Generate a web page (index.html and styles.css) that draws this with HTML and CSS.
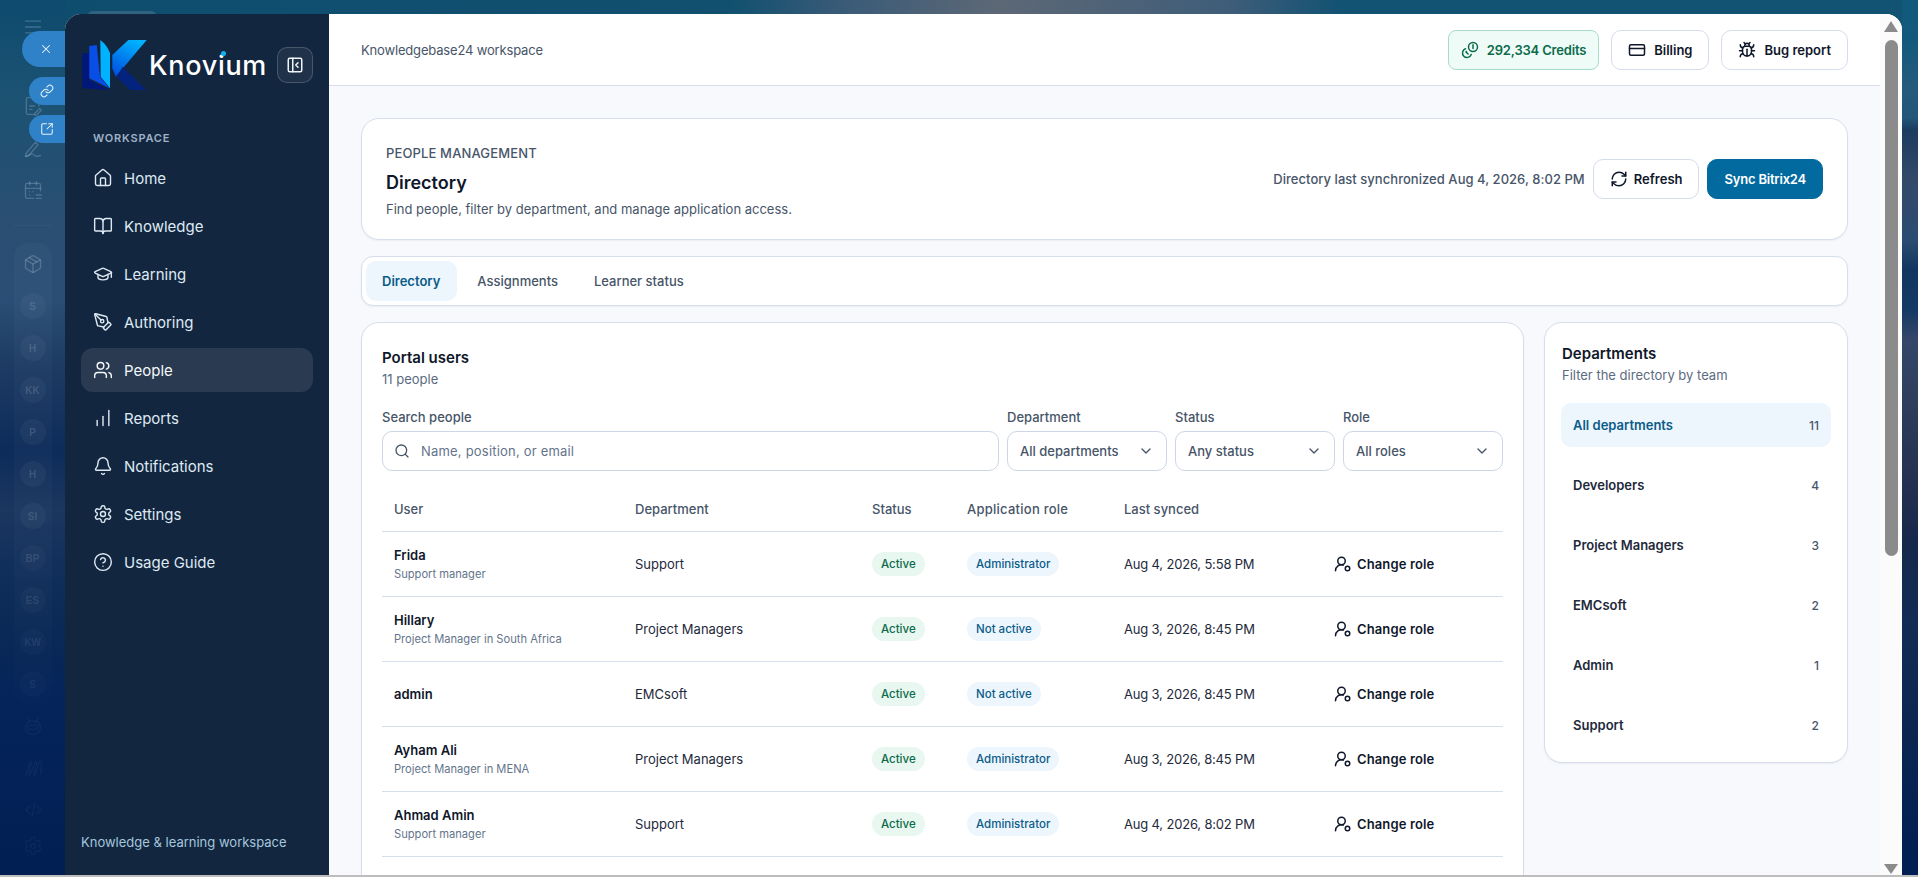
FILE: index.html
```html
<!DOCTYPE html>
<html lang="en">
<head>
<meta charset="utf-8">
<title>Knovium - Directory</title>
<link rel="stylesheet" href="styles.css">
</head>
<body>
<svg class="sprite" aria-hidden="true">
  <defs>
    <linearGradient id="kg" x1="0.7" y1="0" x2="0.2" y2="1"><stop offset="0" stop-color="#00b4ff"/><stop offset="1" stop-color="#0050e0"/></linearGradient>
  </defs>
  <symbol id="i-home" viewBox="0 0 24 24"><path d="M15 21v-8a1 1 0 0 0-1-1h-4a1 1 0 0 0-1 1v8"/><path d="M3 10a2 2 0 0 1 .709-1.528l7-5.999a2 2 0 0 1 2.582 0l7 5.999A2 2 0 0 1 21 10v9a2 2 0 0 1-2 2H5a2 2 0 0 1-2-2z"/></symbol>
  <symbol id="i-book" viewBox="0 0 24 24"><path d="M12 7v14"/><path d="M3 18a1 1 0 0 1-1-1V4a1 1 0 0 1 1-1h5a4 4 0 0 1 4 4 4 4 0 0 1 4-4h5a1 1 0 0 1 1 1v13a1 1 0 0 1-1 1h-6a3 3 0 0 0-3 3 3 3 0 0 0-3-3z"/></symbol>
  <symbol id="i-cap" viewBox="0 0 24 24"><path d="M21.42 10.922a1 1 0 0 0-.019-1.838L12.83 5.18a2 2 0 0 0-1.66 0L2.6 9.08a1 1 0 0 0 0 1.832l8.57 3.908a2 2 0 0 0 1.66 0z"/><path d="M22 10v6"/><path d="M6 12.5V16a6 3 0 0 0 12 0v-3.5"/></symbol>
  <symbol id="i-pen" viewBox="0 0 24 24"><path d="M15.707 21.293a1 1 0 0 1-1.414 0l-1.586-1.586a1 1 0 0 1 0-1.414l5.586-5.586a1 1 0 0 1 1.414 0l1.586 1.586a1 1 0 0 1 0 1.414z"/><path d="m18 13-1.375-6.874a1 1 0 0 0-.746-.776L3.235 2.028a1 1 0 0 0-1.207 1.207L5.35 15.879a1 1 0 0 0 .776.746L13 18"/><path d="m2.3 2.3 7.286 7.286"/><circle cx="11" cy="11" r="2"/></symbol>
  <symbol id="i-users" viewBox="0 0 24 24"><path d="M16 21v-2a4 4 0 0 0-4-4H6a4 4 0 0 0-4 4v2"/><circle cx="9" cy="7" r="4"/><path d="M22 21v-2a4 4 0 0 0-3-3.87"/><path d="M16 3.13a4 4 0 0 1 0 7.75"/></symbol>
  <symbol id="i-bars" viewBox="0 0 24 24"><path d="M5 21v-6"/><path d="M12 21V10"/><path d="M19 21V3"/></symbol>
  <symbol id="i-bell" viewBox="0 0 24 24"><path d="M10.268 21a2 2 0 0 0 3.464 0"/><path d="M3.262 15.326A1 1 0 0 0 4 17h16a1 1 0 0 0 .74-1.673C19.41 13.956 18 12.499 18 8A6 6 0 0 0 6 8c0 4.499-1.411 5.956-2.738 7.326"/></symbol>
  <symbol id="i-gear" viewBox="0 0 24 24"><path d="M12.22 2h-.44a2 2 0 0 0-2 2v.18a2 2 0 0 1-1 1.73l-.43.25a2 2 0 0 1-2 0l-.15-.08a2 2 0 0 0-2.73.73l-.22.38a2 2 0 0 0 .73 2.73l.15.1a2 2 0 0 1 1 1.72v.51a2 2 0 0 1-1 1.74l-.15.09a2 2 0 0 0-.73 2.73l.22.38a2 2 0 0 0 2.73.73l.15-.08a2 2 0 0 1 2 0l.43.25a2 2 0 0 1 1 1.73V20a2 2 0 0 0 2 2h.44a2 2 0 0 0 2-2v-.18a2 2 0 0 1 1-1.73l.43-.25a2 2 0 0 1 2 0l.15.08a2 2 0 0 0 2.73-.73l.22-.39a2 2 0 0 0-.73-2.73l-.15-.08a2 2 0 0 1-1-1.74v-.5a2 2 0 0 1 1-1.74l.15-.09a2 2 0 0 0 .73-2.73l-.22-.38a2 2 0 0 0-2.73-.73l-.15.08a2 2 0 0 1-2 0l-.43-.25a2 2 0 0 1-1-1.73V4a2 2 0 0 0-2-2z"/><circle cx="12" cy="12" r="3"/></symbol>
  <symbol id="i-help" viewBox="0 0 24 24"><circle cx="12" cy="12" r="10"/><path d="M9.09 9a3 3 0 0 1 5.83 1c0 2-3 3-3 3"/><path d="M12 17h.01"/></symbol>
  <symbol id="i-coins" viewBox="0 0 24 24"><g transform="matrix(-1 0 0 1 24 0)"><circle cx="8" cy="8" r="6"/><path d="M18.09 10.37A6 6 0 1 1 10.34 18"/><path d="M8 5v5"/><path d="m16.71 13.88.7.71-2.82 2.82"/></g></symbol>
  <symbol id="i-card" viewBox="0 0 24 24"><rect width="20" height="14" x="2" y="5" rx="2"/><path d="M2 10h20"/></symbol>
  <symbol id="i-bug" viewBox="0 0 24 24"><path d="m8 2 1.88 1.88"/><path d="M14.12 3.88 16 2"/><path d="M9 7.13v-1a3.003 3.003 0 1 1 6 0v1"/><path d="M12 20c-3.3 0-6-2.7-6-6v-3a4 4 0 0 1 4-4h4a4 4 0 0 1 4 4v3c0 3.3-2.7 6-6 6"/><path d="M12 20v-9"/><path d="M6.53 9C4.6 8.8 3 7.1 3 5"/><path d="M6 13H2"/><path d="M3 21c0-2.1 1.7-3.9 3.8-4"/><path d="M20.97 5c0 2.1-1.6 3.8-3.5 4"/><path d="M22 13h-4"/><path d="M17.2 17c2.1.1 3.8 1.9 3.8 4"/></symbol>
  <symbol id="i-refresh" viewBox="0 0 24 24"><path d="M3 12a9 9 0 0 1 9-9 9.75 9.75 0 0 1 6.74 2.74L21 8"/><path d="M21 3v5h-5"/><path d="M21 12a9 9 0 0 1-9 9 9.75 9.75 0 0 1-6.74-2.74L3 16"/><path d="M8 16H3v5"/></symbol>
  <symbol id="i-search" viewBox="0 0 24 24"><circle cx="11" cy="11" r="8"/><path d="m21 21-4.3-4.3"/></symbol>
  <symbol id="i-chev" viewBox="0 0 24 24"><path d="m6 9 6 6 6-6"/></symbol>
  <symbol id="i-role" viewBox="0 0 24 24"><path d="M2 21a8 8 0 0 1 10.434-7.62"/><circle cx="10" cy="8" r="5"/><circle cx="18" cy="18" r="3"/></symbol>
  <symbol id="i-panel" viewBox="0 0 24 24"><rect width="18" height="18" x="3" y="3" rx="2"/><path d="M9 3v18"/><path d="m16 15-3-3 3-3"/></symbol>
  <symbol id="i-x" viewBox="0 0 24 24"><path d="M18 6 6 18"/><path d="m6 6 12 12"/></symbol>
  <symbol id="i-link" viewBox="0 0 24 24"><path d="M10 13a5 5 0 0 0 7.54.54l3-3a5 5 0 0 0-7.07-7.07l-1.72 1.71"/><path d="M14 11a5 5 0 0 0-7.54-.54l-3 3a5 5 0 0 0 7.07 7.07l1.71-1.71"/></symbol>
  <symbol id="i-ext" viewBox="0 0 24 24"><path d="M21 13v6a2 2 0 0 1-2 2H5a2 2 0 0 1-2-2V5a2 2 0 0 1 2-2h6"/><path d="m21 3-9 9"/><path d="M15 3h6v6"/></symbol>
  <symbol id="i-menu" viewBox="0 0 24 24"><path d="M3 5h18"/><path d="M3 12h18"/><path d="M3 19h18"/></symbol>
  <symbol id="i-doc" viewBox="0 0 24 24"><path d="M13 22H6a2 2 0 0 1-2-2V4a2 2 0 0 1 2-2h8l5 5v5"/><path d="M8 12h6"/><path d="M8 16h3"/><path d="m14 21 6-6 2 2-6 6h-2z"/></symbol>
  <symbol id="i-sign" viewBox="0 0 24 24"><path d="m4 18 11-13 3 3L7 21l-4 1z"/><path d="M3 22c4 0 5-3 8-3s2 3 5 3 3-1 5-1"/></symbol>
  <symbol id="i-cal" viewBox="0 0 24 24"><path d="M8 2v4"/><path d="M16 2v4"/><path d="M21 13V6a2 2 0 0 0-2-2H5a2 2 0 0 0-2 2v14a2 2 0 0 0 2 2h8"/><path d="M3 10h18"/><path d="M16 18h6"/><path d="M16 22h6"/><path d="M8 14h.01"/><path d="M12 14h.01"/><path d="M8 18h.01"/></symbol>
  <symbol id="i-box" viewBox="0 0 24 24"><path d="M21 8a2 2 0 0 0-1-1.73l-7-4a2 2 0 0 0-2 0l-7 4A2 2 0 0 0 3 8v8a2 2 0 0 0 1 1.73l7 4a2 2 0 0 0 2 0l7-4A2 2 0 0 0 21 16z"/><path d="m3.3 7 8.7 5 8.7-5"/><path d="M12 22V12"/><path d="m7.5 4.3 9 5.1"/></symbol>
  <symbol id="i-bot" viewBox="0 0 24 24"><path d="m6 2 2 4"/><path d="m18 2-2 4"/><rect x="3" y="6" width="18" height="16" rx="8"/><rect x="6" y="11" width="12" height="5" rx="2.5"/></symbol>
  <symbol id="i-wave" viewBox="0 0 24 24"><path d="M3 21 8 6c1-3 3-2 2 1L7 18c-1 3 1 3 2 1l5-13c1-3 3-2 2 1l-3 11c-1 3 1 3 2 1l4-13c1-3 3-2 3 1l-1 12"/></symbol>
  <symbol id="i-code" viewBox="0 0 24 24"><path d="m9 7-6 5 6 5"/><path d="m14 4-3 16"/><path d="m16 7 6 5-6 5"/></symbol>
</svg>

<div class="stage">
  <nav class="rail">
    <div class="rail-item"><svg class="ico rail-ico"><use href="#i-menu"/></svg></div>
    <div class="rail-tools">
      <div class="rail-item"><svg class="ico rail-ico"><use href="#i-doc"/></svg></div>
      <div class="rail-item"><svg class="ico rail-ico"><use href="#i-sign"/></svg></div>
      <div class="rail-item"><svg class="ico rail-ico"><use href="#i-cal"/></svg></div>
    </div>
    <div class="rail-rule"></div>
    <div class="rail-group">
      <div class="rail-item"><svg class="ico rail-ico"><use href="#i-box"/></svg></div>
      <div class="rail-item"><span class="avatar">S</span></div>
      <div class="rail-item"><span class="avatar">H</span></div>
      <div class="rail-item"><span class="avatar">KK</span></div>
      <div class="rail-item"><span class="avatar">P</span></div>
      <div class="rail-item"><span class="avatar">H</span></div>
      <div class="rail-item"><span class="avatar">SI</span></div>
      <div class="rail-item"><span class="avatar">BP</span></div>
      <div class="rail-item"><span class="avatar">ES</span></div>
      <div class="rail-item"><span class="avatar">KW</span></div>
      <div class="rail-item"><span class="avatar">S</span></div>
    </div>
    <div class="rail-item rail-dim"><svg class="ico rail-ico"><use href="#i-bot"/></svg></div>
    <div class="rail-item rail-dim"><svg class="ico rail-ico"><use href="#i-wave"/></svg></div>
    <div class="rail-item rail-dim"><svg class="ico rail-ico"><use href="#i-code"/></svg></div>
    <div class="rail-item rail-dim rail-last"><svg class="ico rail-ico"><use href="#i-gear"/></svg></div>
  </nav>
  <div class="pill pill-close"><svg class="ico pill-ico"><use href="#i-x"/></svg></div>
  <div class="pill pill-link"><svg class="ico pill-ico"><use href="#i-link"/></svg></div>
  <div class="pill pill-open"><svg class="ico pill-ico"><use href="#i-ext"/></svg></div>
  <div class="peek"></div>

  <div class="window">
    <aside class="sidebar">
      <div class="brand">
        <div class="brand-logo">
          <svg class="logo-mark" viewBox="0 0 66 53" aria-hidden="true">
            <path d="M.3 15.300H7.300V42L27 52 .3 50.300z" fill="#02177a"/>
            <path d="M7.300 8l7.400-1L18 38.700l9.300 11.600L7.300 40.300z" fill="#0a4ee8"/>
            <path d="M18.300 2Q25 7 28 15V50.300L18.700 38.700z" fill="#00b2ff"/>
            <path d="M46.300 2H64.700L33.700 38.700 30.300 30.300V17z" fill="url(#kg)"/>
            <path d="M40.700 28.700 64 52H48L34.700 38.700z" fill="#03237f"/>
          </svg>
          <span class="logo-word">Knovium<i class="logo-dot"></i></span>
        </div>
        <button class="collapse" type="button" aria-label="Collapse sidebar"><svg class="ico ico-18"><use href="#i-panel"/></svg></button>
      </div>
      <div class="nav-label">WORKSPACE</div>
      <ul class="nav">
        <li class="nav-item"><svg class="ico ico-20"><use href="#i-home"/></svg>Home</li>
        <li class="nav-item"><svg class="ico ico-20"><use href="#i-book"/></svg>Knowledge</li>
        <li class="nav-item"><svg class="ico ico-20"><use href="#i-cap"/></svg>Learning</li>
        <li class="nav-item"><svg class="ico ico-20"><use href="#i-pen"/></svg>Authoring</li>
        <li class="nav-item is-active"><svg class="ico ico-20"><use href="#i-users"/></svg>People</li>
        <li class="nav-item"><svg class="ico ico-20"><use href="#i-bars"/></svg>Reports</li>
        <li class="nav-item"><svg class="ico ico-20"><use href="#i-bell"/></svg>Notifications</li>
        <li class="nav-item"><svg class="ico ico-20"><use href="#i-gear"/></svg>Settings</li>
        <li class="nav-item"><svg class="ico ico-20"><use href="#i-help"/></svg>Usage Guide</li>
      </ul>
      <div class="side-foot">Knowledge &amp; learning workspace</div>
    </aside>

    <div class="content">
      <header class="topbar">
        <div class="crumb">Knowledgebase24 workspace</div>
        <div class="top-actions">
          <button class="btn btn-credits" type="button"><svg class="ico ico-18"><use href="#i-coins"/></svg>292,334 Credits</button>
          <button class="btn" type="button"><svg class="ico ico-18"><use href="#i-card"/></svg>Billing</button>
          <button class="btn" type="button"><svg class="ico ico-18"><use href="#i-bug"/></svg>Bug report</button>
        </div>
      </header>

      <main class="main">
        <section class="card hero">
          <div class="hero-text">
            <div class="eyebrow">PEOPLE MANAGEMENT</div>
            <h1 class="hero-title">Directory</h1>
            <p class="hero-desc">Find people, filter by department, and manage application access.</p>
          </div>
          <div class="hero-actions">
            <span class="sync-note">Directory last synchronized Aug 4, 2026, 8:02 PM</span>
            <button class="btn btn-compact" type="button"><svg class="ico ico-18"><use href="#i-refresh"/></svg>Refresh</button>
            <button class="btn btn-primary" type="button">Sync Bitrix24</button>
          </div>
        </section>

        <div class="card tabs">
          <span class="tab is-active">Directory</span>
          <span class="tab">Assignments</span>
          <span class="tab">Learner status</span>
        </div>

        <div class="columns">
          <section class="card users">
            <h2 class="sec-title">Portal users</h2>
            <p class="sec-sub">11 people</p>
            <div class="filters">
              <div class="field">
                <span class="field-label">Search people</span>
                <div class="control"><svg class="ico ico-16 search-ico"><use href="#i-search"/></svg><span class="placeholder">Name, position, or email</span></div>
              </div>
              <div class="field">
                <span class="field-label">Department</span>
                <div class="control select"><span>All departments</span><svg class="ico ico-16"><use href="#i-chev"/></svg></div>
              </div>
              <div class="field">
                <span class="field-label">Status</span>
                <div class="control select"><span>Any status</span><svg class="ico ico-16"><use href="#i-chev"/></svg></div>
              </div>
              <div class="field">
                <span class="field-label">Role</span>
                <div class="control select"><span>All roles</span><svg class="ico ico-16"><use href="#i-chev"/></svg></div>
              </div>
            </div>
            <table class="table">
              <colgroup><col class="c-user"><col class="c-dept"><col class="c-status"><col class="c-role"><col class="c-sync"><col class="c-act"></colgroup>
              <thead><tr><th>User</th><th>Department</th><th>Status</th><th class="th-wide">Application role</th><th>Last synced</th><th></th></tr></thead>
              <tbody>
                <tr>
                  <td><div class="name">Frida</div><div class="position">Support manager</div></td>
                  <td>Support</td>
                  <td><span class="badge badge-green">Active</span></td>
                  <td><span class="badge badge-blue">Administrator</span></td>
                  <td class="date">Aug 4, 2026, 5:58 PM</td>
                  <td><span class="act"><svg class="ico ico-18"><use href="#i-role"/></svg>Change role</span></td>
                </tr>
                <tr>
                  <td><div class="name">Hillary</div><div class="position">Project Manager in South Africa</div></td>
                  <td>Project Managers</td>
                  <td><span class="badge badge-green">Active</span></td>
                  <td><span class="badge badge-blue">Not active</span></td>
                  <td class="date">Aug 3, 2026, 8:45 PM</td>
                  <td><span class="act"><svg class="ico ico-18"><use href="#i-role"/></svg>Change role</span></td>
                </tr>
                <tr>
                  <td><div class="name">admin</div></td>
                  <td>EMCsoft</td>
                  <td><span class="badge badge-green">Active</span></td>
                  <td><span class="badge badge-blue">Not active</span></td>
                  <td class="date">Aug 3, 2026, 8:45 PM</td>
                  <td><span class="act"><svg class="ico ico-18"><use href="#i-role"/></svg>Change role</span></td>
                </tr>
                <tr>
                  <td><div class="name">Ayham Ali</div><div class="position">Project Manager in MENA</div></td>
                  <td>Project Managers</td>
                  <td><span class="badge badge-green">Active</span></td>
                  <td><span class="badge badge-blue">Administrator</span></td>
                  <td class="date">Aug 3, 2026, 8:45 PM</td>
                  <td><span class="act"><svg class="ico ico-18"><use href="#i-role"/></svg>Change role</span></td>
                </tr>
                <tr>
                  <td><div class="name">Ahmad Amin</div><div class="position">Support manager</div></td>
                  <td>Support</td>
                  <td><span class="badge badge-green">Active</span></td>
                  <td><span class="badge badge-blue">Administrator</span></td>
                  <td class="date">Aug 4, 2026, 8:02 PM</td>
                  <td><span class="act"><svg class="ico ico-18"><use href="#i-role"/></svg>Change role</span></td>
                </tr>
              </tbody>
            </table>
          </section>

          <aside class="card depts">
            <h2 class="sec-title">Departments</h2>
            <p class="sec-sub">Filter the directory by team</p>
            <ul class="dept-list">
              <li class="dept is-active"><span>All departments</span><span class="count">11</span></li>
              <li class="dept"><span>Developers</span><span class="count">4</span></li>
              <li class="dept"><span>Project Managers</span><span class="count">3</span></li>
              <li class="dept"><span>EMCsoft</span><span class="count">2</span></li>
              <li class="dept"><span>Admin</span><span class="count">1</span></li>
              <li class="dept"><span>Support</span><span class="count">2</span></li>
            </ul>
          </aside>
        </div>
      </main>
    </div>

    <div class="scrollbar">
      <span class="arrow arrow-up"></span>
      <span class="thumb"></span>
      <span class="arrow arrow-down"></span>
    </div>
  </div>
  <div class="strip"></div>
</div>
<div class="edge"></div>
</body>
</html>
```

FILE: styles.css
```css
* { box-sizing: border-box; }
html, body { margin: 0; height: 100%; }
body {
  display: flex;
  flex-direction: column;
  height: 877px;
  overflow: hidden;
  font-family: Inter, "Noto Sans", "Liberation Sans", sans-serif;
  font-size: 13px;
  color: #0f172a;
  background:
    linear-gradient(90deg, #0f4d6f 0, #11506f 38%, #3a5b78 44%, #5d6876 52%, #3f5d79 64%, #125273 70%, #125273 100%);
}
h1, h2, p, ul { margin: 0; padding: 0; }
ul { list-style: none; }
button { font: inherit; cursor: pointer; }
.sprite { position: absolute; width: 0; height: 0; }

.ico { fill: none; stroke: currentColor; stroke-width: 2; stroke-linecap: round; stroke-linejoin: round; flex: none; display: block; }
.ico-16 { width: 16px; height: 16px; }
.ico-18 { width: 18px; height: 18px; }
.ico-20 { width: 20px; height: 20px; stroke-width: 1.7; }

.stage { flex: 1; display: flex; min-height: 0; position: relative; }
.edge { height: 2px; background: #bdbdbd; flex: none; }

/* Left rail */
.rail {
  width: 65px;
  flex: none;
  background:
    linear-gradient(180deg, #0d4a6d 0, #1b5273 90px, #2a4f72 220px, #2a4e75 300px, #1c3a63 370px, #0d2c5a 450px, #1a3760 510px, #12305c 560px, #0b2a56 620px, #05245a 700px, #011f52 875px);
  display: flex;
  flex-direction: column;
  padding-top: 6px;
  color: rgba(198, 214, 232, .26);
  overflow: hidden;
}
.rail-item { height: 42px; flex: none; display: flex; align-items: center; justify-content: center; }
.rail-tools { margin-top: 37px; }
.rail-rule { height: 1px; margin: 14px 14px 17px; background: rgba(255, 255, 255, .04); flex: none; }
.rail-group {
  width: 38px; margin: 0 auto; flex: none;
  background: rgba(255, 255, 255, .025); border-radius: 14px;
  -webkit-mask-image: linear-gradient(180deg, #000 55%, rgba(0, 0, 0, .35) 100%);
  mask-image: linear-gradient(180deg, #000 55%, rgba(0, 0, 0, .35) 100%);
}
.rail-ico { width: 20px; height: 20px; stroke-width: 1.6; }
.rail-dim { color: rgba(198, 214, 232, .05); }
.rail-last { margin-top: -6px; }
.avatar {
  width: 26px; height: 26px; border-radius: 50%;
  background: rgba(255, 255, 255, .04);
  color: rgba(210, 222, 238, .17);
  font: 700 10px "Liberation Sans", sans-serif;
  display: flex; align-items: center; justify-content: center;
}
.pill { position: absolute; right: calc(100% - 65px); display: flex; align-items: center; background: #2f82c8; color: #eaf3fb; }
.pill-close { top: 31px; width: 43px; height: 36px; border-radius: 18px 0 0 18px; padding-left: 17px; }
.pill-link { top: 77px; width: 36px; height: 28px; border-radius: 14px 0 0 14px; padding-left: 11px; }
.pill-open { top: 115px; width: 36px; height: 28px; border-radius: 14px 0 0 14px; padding-left: 11px; }
.pill-ico { width: 14px; height: 14px; stroke-width: 1.8; }
.peek { position: absolute; left: 87px; top: 11px; width: 70px; height: 12px; border-radius: 8px; background: rgba(255, 255, 255, .13); }

/* Window */
.window {
  width: 1837px;
  flex: none;
  margin-top: 14px;
  display: flex;
  background: #fff;
  border-radius: 16px 16px 0 0;
  overflow: hidden;
  position: relative;
}
.strip {
  flex: 1;
  background: linear-gradient(180deg, #115a7c 0, #13597c 40px, #255a7c 90px, #235678 118px, #1b3c60 130px, #33496a 180px, #2a4c72 240px, #123660 270px, #153a64 310px, #34476a 340px, #2e3e5c 400px, #232f50 490px, #16284c 540px, #112c55 620px, #0b2650 720px, #001f52 860px);
}

/* Sidebar */
.sidebar {
  width: 264px; flex: none;
  background: #12263f;
  color: #e2ecf6;
  display: flex; flex-direction: column;
  padding: 24px 16px 24px;
}
.brand { display: flex; align-items: center; justify-content: space-between; }
.brand-logo { display: flex; align-items: center; margin-left: 1px; }
.logo-mark { width: 66px; height: 53px; display: block; }
.logo-word { position: relative; margin-left: 1px; margin-top: 3px; font-size: 27px; font-weight: 550; color: #fff; line-height: 34px; letter-spacing: .7px; }
.logo-dot { position: absolute; left: 72px; top: 2px; width: 5px; height: 5px; border-radius: 50%; background: #0db2f2; }
.collapse {
  width: 36px; height: 36px; border-radius: 10px;
  background: rgba(255, 255, 255, .06);
  border: 1px solid rgba(255, 255, 255, .18);
  color: #f1f5f9; padding: 0;
  display: flex; align-items: center; justify-content: center;
}
.nav-label { margin: 39px 0 0 12px; font-size: 11px; line-height: 16px; font-weight: 600; letter-spacing: .8px; color: #9fb1c6; }
.nav { margin-top: 10px; display: flex; flex-direction: column; gap: 4px; }
.nav-item {
  height: 44px; border-radius: 12px;
  padding: 0 12px; display: flex; align-items: center; gap: 11px;
  font-size: 15px; font-weight: 400; color: #dfe9f3;
}
.nav-item.is-active { background: #2a3a50; color: #f4f8fc; }
.side-foot { margin-top: auto; font-size: 13px; line-height: 18px; color: #a5c6dd; }

/* Content */
.content { flex: 1; min-width: 0; display: flex; flex-direction: column; }
.topbar {
  height: 72px; flex: none;
  background: #fff;
  border-bottom: 1px solid #d6deea;
  display: flex; align-items: center; justify-content: space-between;
  padding: 1px 32px 0;
}
.crumb { color: #475569; font-size: 13px; letter-spacing: -.17px; }
.top-actions { display: flex; gap: 12px; }
.btn {
  height: 40px; padding: 0 16px;
  display: inline-flex; align-items: center; gap: 8px;
  background: #fff; border: 1px solid #d5dcea; border-radius: 10px;
  font-size: 13px; font-weight: 600; color: #0f172a; white-space: nowrap;
}
.btn-credits { background: #effbf7; border-color: #a7dcc7; color: #0b6b4b; border-radius: 8px; padding: 0 12px; letter-spacing: -.18px; }
.btn-compact { gap: 6px; }
.btn-primary { background: #026a9e; border-color: #026a9e; color: #fff; letter-spacing: -.2px; }

.main { flex: 1; min-height: 0; background: #f7f9fd; padding: 32px 32px 0; display: flex; flex-direction: column; gap: 16px; overflow: hidden; }
.card { background: #fff; border: 1px solid #d5deea; border-radius: 18px; box-shadow: 0 1px 2px rgba(15, 23, 42, .05); flex: none; }
.hero { height: 122px; padding: 0 24px; display: flex; align-items: center; justify-content: space-between; }
.hero-text { padding-top: 4px; }
.eyebrow { font-size: 13px; line-height: 18px; font-weight: 500; color: #475569; letter-spacing: .14px; }
.hero-title { font-size: 18px; line-height: 28px; font-weight: 600; color: #0f172a; margin-top: 7px; }
.hero-desc { font-size: 13px; line-height: 18px; color: #475569; margin-top: 3px; }
.hero-actions { display: flex; align-items: center; gap: 8px; }
.sync-note { font-weight: 500; color: #475569; letter-spacing: .04px; }

.tabs { height: 50px; padding: 4px; display: flex; align-items: center; gap: 4px; border-radius: 12px; }
.tab { height: 40px; padding: 0 16px; border-radius: 10px; display: flex; align-items: center; font-weight: 500; color: #475569; }
.tab.is-active { background: #edf5fd; color: #0b5c88; font-weight: 600; padding-right: 17px; }

.columns { display: grid; grid-template-columns: 1fr 304px; gap: 20px; align-items: start; }
.users { padding: 24px 20px 60px; }
.sec-title { font-size: 15px; line-height: 22px; font-weight: 600; color: #0f172a; }
.sec-sub { font-size: 13px; line-height: 20px; color: #5b6b7f; }
.filters { margin-top: 18px; display: grid; grid-template-columns: 1fr 160px 160px 160px; gap: 8px; }
.field { display: flex; flex-direction: column; gap: 4px; }
.field-label { font-weight: 500; color: #475569; line-height: 20px; }
.control { height: 40px; border: 1px solid #ccd6e4; border-radius: 10px; padding: 0 12px; display: flex; align-items: center; background: #fff; color: #475569; font-weight: 500; }
.select { justify-content: space-between; }
.search-ico { color: #475569; margin: 0 11px 0 -1px; }
.placeholder { color: #64748b; font-weight: 400; letter-spacing: .2px; }

.table { width: 100%; margin-top: 16px; border-collapse: collapse; table-layout: fixed; }
.c-user { width: 241px; } .c-dept { width: 237px; } .c-status { width: 95px; } .c-role { width: 157px; } .c-sync { width: 210px; }
.table th { height: 44px; padding: 0 12px; text-align: left; font-weight: 500; color: #475569; border-bottom: 1px solid #d5deea; }
.table .th-wide { letter-spacing: .25px; }
.table td { height: 65px; padding: 0 12px; border-bottom: 1px solid #d5deea; color: #1e293b; vertical-align: middle; }
.table .date { letter-spacing: -.18px; }
.name { font-weight: 600; color: #0f172a; line-height: 20px; }
.position { font-size: 11.15px; line-height: 16px; color: #64748b; margin-top: 1px; }
.badge { display: inline-flex; align-items: center; height: 24px; padding: 0 9px; border-radius: 12px; font-size: 11.5px; font-weight: 500; vertical-align: middle; }
.badge-green { background: #e8f7f0; color: #0b6b4b; }
.badge-blue { background: #edf5fd; color: #0b5c88; }
.act { display: inline-flex; align-items: center; gap: 5px; font-weight: 600; color: #0f172a; vertical-align: middle; letter-spacing: .12px; }

.depts { padding: 20px 16px 15px; }
.depts .sec-title, .depts .sec-sub { padding-left: 1px; }
.dept-list { margin-top: 18px; display: flex; flex-direction: column; gap: 16px; }
.dept { height: 44px; padding: 0 12px; border-radius: 10px; display: flex; align-items: center; justify-content: space-between; font-weight: 600; color: #1e293b; }
.dept.is-active { background: #edf5fd; color: #0b5c88; }
.count { font-size: 12px; font-weight: 500; color: #475569; }

/* Scrollbar */
.scrollbar { width: 22px; flex: none; background: #fbfbfb; display: flex; flex-direction: column; align-items: center; padding: 7px 0 1px; }
.thumb { width: 13px; height: 516px; margin-top: 8px; background: #8b8b8b; border-radius: 7px; }
.arrow { width: 0; height: 0; border-left: 7px solid transparent; border-right: 7px solid transparent; }
.arrow-up { border-bottom: 11px solid #8b8b8b; }
.arrow-down { margin-top: auto; border-top: 10px solid #8b8b8b; }
```
